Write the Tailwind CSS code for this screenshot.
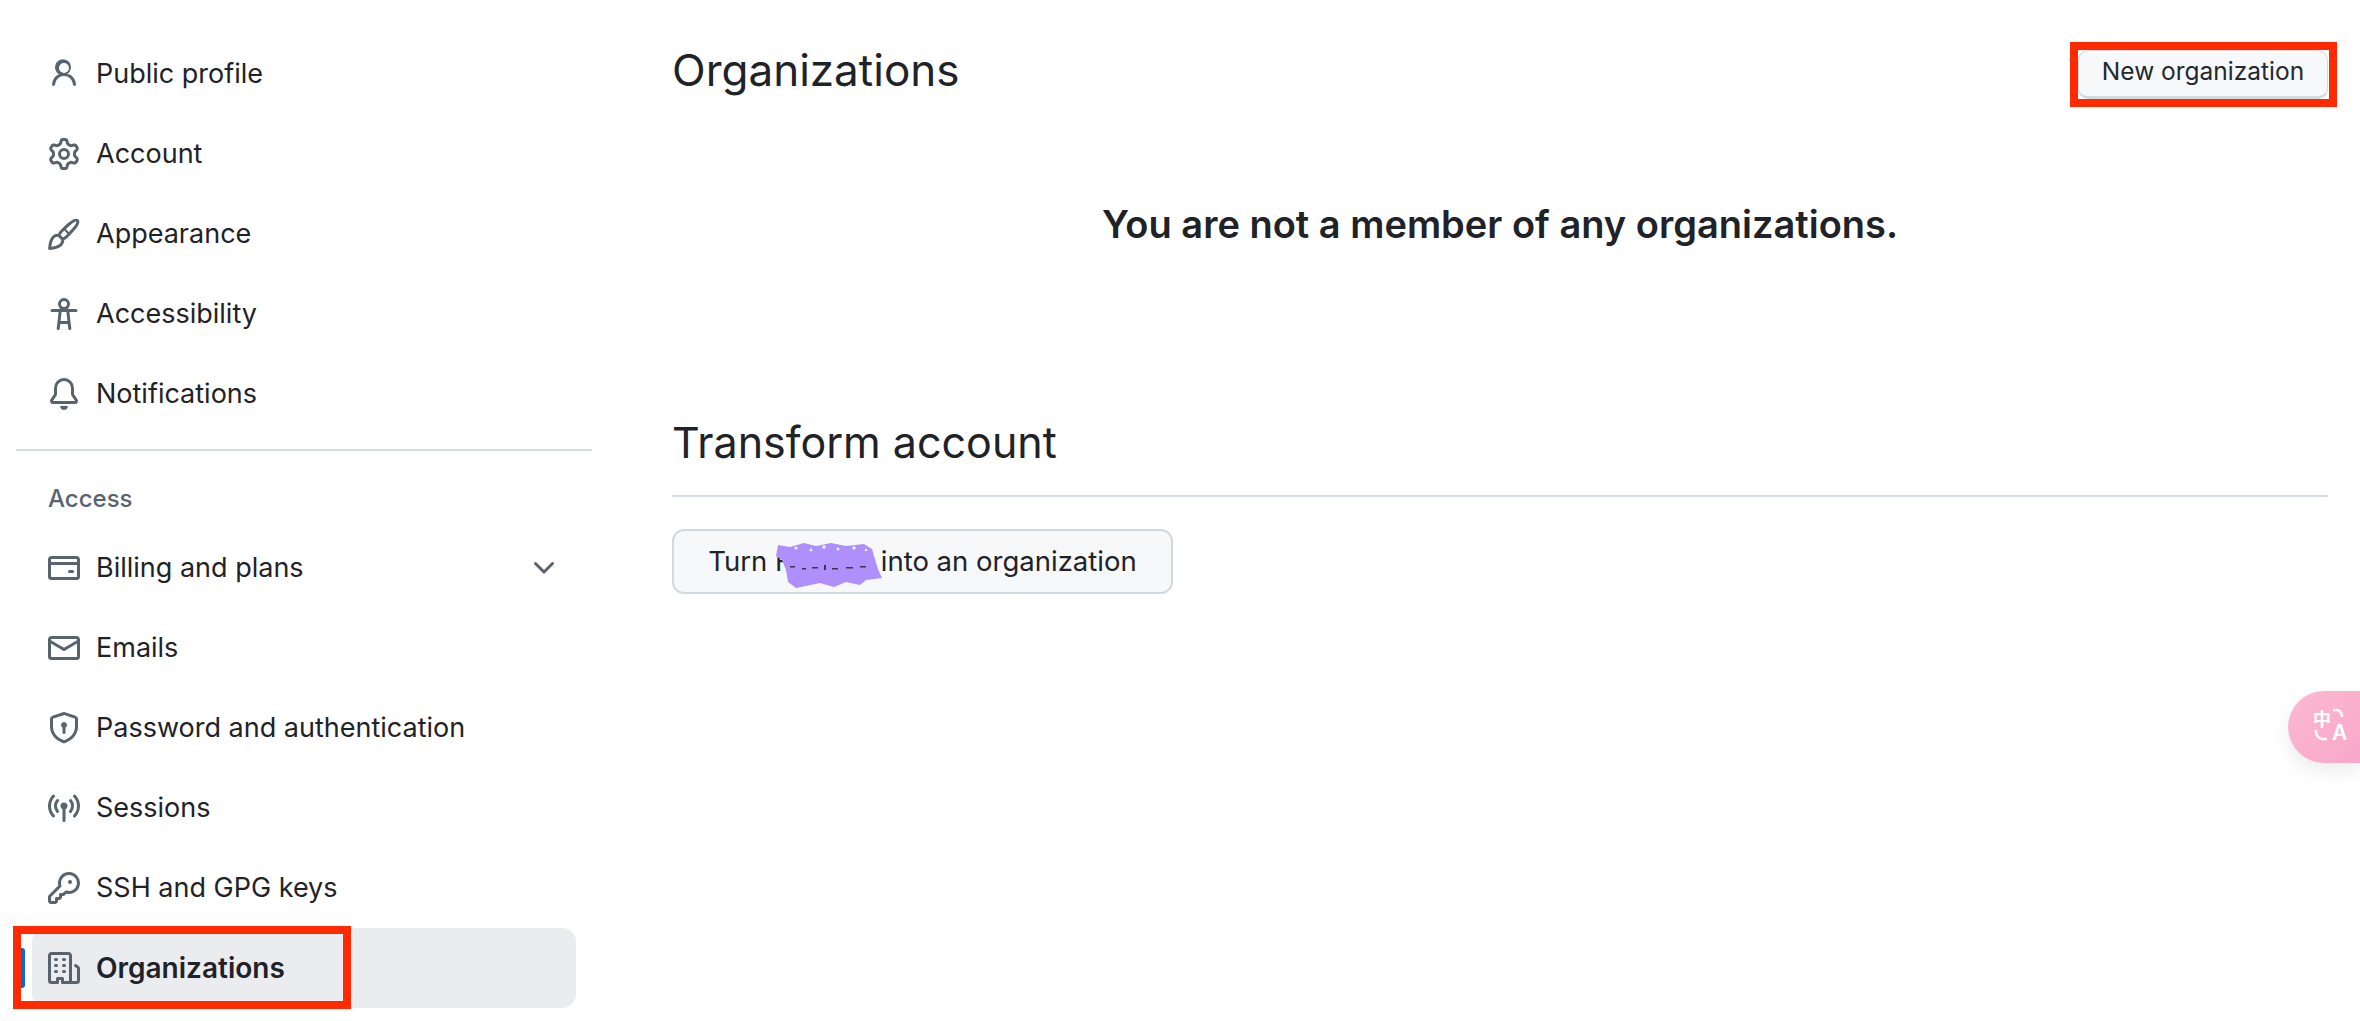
<!DOCTYPE html>
<html lang="en">
<head>
<meta charset="utf-8">
<title>Organizations</title>
<script src="https://cdn.jsdelivr.net/npm/@tailwindcss/browser@4"></script>
</head>
<body class="bg-white overflow-hidden">
<div class="relative w-[2360px] h-[1021px] overflow-hidden flex font-['Inter','Liberation_Sans',sans-serif] text-[#1f2328]">
  <!-- Sidebar -->
  <nav class="w-[576px] ml-[16px] pt-[34px] shrink-0 flex flex-col text-[27px]">
    <a class="h-[80px] flex items-center pl-[32px]"><svg class="w-[32px] h-[32px] mr-[16px] fill-[#59636e]" viewBox="0 0 16 16"><path d="M10.561 8.073a6.005 6.005 0 0 1 3.432 5.142.75.75 0 1 1-1.498.07 4.5 4.5 0 0 0-8.99 0 .75.75 0 1 1-1.498-.07 6.004 6.004 0 0 1 3.431-5.142 3.999 3.999 0 1 1 4.123 0ZM10.5 5a2.5 2.5 0 1 0-5 0 2.5 2.5 0 0 0 5 0Z"/></svg>Public profile</a>
    <a class="h-[80px] flex items-center pl-[32px]"><svg class="w-[32px] h-[32px] mr-[16px] fill-[#59636e]" viewBox="0 0 16 16"><path d="M8 0a8.2 8.2 0 0 1 .701.031C9.444.095 9.99.645 10.16 1.29l.288 1.107c.018.066.079.158.212.224.231.114.454.243.668.386.123.082.233.09.299.071l1.103-.303c.644-.176 1.392.021 1.82.63.27.385.506.792.704 1.218.315.675.111 1.422-.364 1.891l-.814.806c-.049.048-.098.147-.088.294.016.257.016.515 0 .772-.01.147.038.246.088.294l.814.806c.475.469.679 1.216.364 1.891a7.977 7.977 0 0 1-.704 1.217c-.428.61-1.176.807-1.82.63l-1.102-.302c-.067-.019-.177-.011-.3.071a5.909 5.909 0 0 1-.668.386c-.133.066-.194.158-.211.224l-.29 1.106c-.168.646-.715 1.196-1.458 1.26a8.006 8.006 0 0 1-1.402 0c-.743-.064-1.289-.614-1.458-1.26l-.289-1.106c-.018-.066-.079-.158-.212-.224a5.738 5.738 0 0 1-.668-.386c-.123-.082-.233-.09-.299-.071l-1.103.303c-.644.176-1.392-.021-1.82-.63a8.12 8.12 0 0 1-.704-1.218c-.315-.675-.111-1.422.363-1.891l.815-.806c.05-.048.098-.147.088-.294a6.214 6.214 0 0 1 0-.772c.01-.147-.038-.246-.088-.294l-.815-.806C.635 6.045.431 5.298.746 4.623a7.92 7.92 0 0 1 .704-1.217c.428-.61 1.176-.807 1.82-.63l1.102.302c.067.019.177.011.3-.071.214-.143.437-.272.668-.386.133-.066.194-.158.211-.224l.29-1.106C6.009.645 6.556.095 7.299.03 7.53.01 7.764 0 8 0Zm-.571 1.525c-.036.003-.108.036-.137.146l-.289 1.105c-.147.561-.549.967-.998 1.189-.173.086-.34.183-.5.29-.417.278-.97.423-1.529.27l-1.103-.303c-.109-.03-.175.016-.195.045-.22.312-.412.644-.573.99-.014.031-.021.11.059.19l.815.806c.411.406.562.957.53 1.456a4.709 4.709 0 0 0 0 .582c.032.499-.119 1.05-.53 1.456l-.815.806c-.081.08-.073.159-.059.19.162.346.353.677.573.989.02.03.085.076.195.046l1.102-.303c.56-.153 1.113-.008 1.53.27.161.107.328.204.501.29.447.222.85.629.997 1.189l.289 1.105c.029.109.101.143.137.146a6.6 6.6 0 0 0 1.142 0c.036-.003.108-.036.137-.146l.289-1.105c.147-.561.549-.967.998-1.189.173-.086.34-.183.5-.29.417-.278.97-.423 1.529-.27l1.103.303c.109.029.175-.016.195-.045.22-.313.411-.644.573-.99.014-.031.021-.11-.059-.19l-.815-.806c-.411-.406-.562-.957-.53-1.456a4.709 4.709 0 0 0 0-.582c-.032-.499.119-1.05.53-1.456l.815-.806c.081-.08.073-.159.059-.19a6.464 6.464 0 0 0-.573-.989c-.02-.03-.085-.076-.195-.046l-1.102.303c-.56.153-1.113.008-1.53-.27a4.44 4.44 0 0 0-.501-.29c-.447-.222-.85-.629-.997-1.189l-.289-1.105c-.029-.11-.101-.143-.137-.146a6.6 6.6 0 0 0-1.142 0ZM11 8a3 3 0 1 1-6 0 3 3 0 0 1 6 0ZM9.5 8a1.5 1.5 0 1 0-3.001.001A1.5 1.5 0 0 0 9.5 8Z"/></svg>Account</a>
    <a class="h-[80px] flex items-center pl-[32px]"><svg class="w-[32px] h-[32px] mr-[16px]" viewBox="0 0 16 16" fill="none" stroke="#59636e" stroke-width="1.5" stroke-linejoin="round" stroke-linecap="round"><path d="M14.7 1.3c-.7-.7-2.2.2-3.6 1.3-1.4 1.1-3 2.7-4.2 3.9-.7.7-1.2 1.5-1.5 2.2l1.9 1.9c.7-.3 1.5-.8 2.2-1.5 1.2-1.2 2.8-2.8 3.9-4.2 1.1-1.4 2-2.9 1.3-3.6Z"/><path d="M5.4 8.7c-1-.2-2 .1-2.7.8C1.5 10.7 1 13 .8 15.2c2.2-.2 4.5-.7 5.7-1.9.7-.7 1-1.7.8-2.7"/><path d="M8 5.4l2.6 2.6" stroke-width="1"/></svg>Appearance</a>
    <a class="h-[80px] flex items-center pl-[32px]"><svg class="w-[32px] h-[32px] mr-[16px] fill-[#59636e]" viewBox="0 0 16 16"><path d="M9.923 5.302c.063.063.122.129.178.198H14A.75.75 0 0 1 14 7h-3.3l.578 5.163.362 2.997a.75.75 0 0 1-1.49.18L9.868 13H6.132l-.282 2.34a.75.75 0 0 1-1.49-.18l.362-2.997L5.3 7H2a.75.75 0 0 1 0-1.5h3.9a2.54 2.54 0 0 1 .176-.198 3 3 0 1 1 3.847 0ZM9.2 7H6.8l-.51 4.5h3.42ZM9.5 3a1.5 1.5 0 1 0-3.001.001A1.5 1.5 0 0 0 9.5 3Z"/></svg>Accessibility</a>
    <a class="h-[80px] flex items-center pl-[32px]"><svg class="w-[32px] h-[32px] mr-[16px] fill-[#59636e]" viewBox="0 0 16 16"><path d="M8 16c.9 0 1.7-.6 1.9-1.5.1-.3-.1-.5-.4-.5h-3c-.3 0-.5.2-.4.5.2.9 1 1.5 1.9 1.5ZM3 5a5 5 0 0 1 10 0v2.947c0 .05.015.098.042.139l1.703 2.555A1.519 1.519 0 0 1 13.482 13H2.518a1.516 1.516 0 0 1-1.263-2.36l1.703-2.554A.255.255 0 0 0 3 7.947Zm5-3.5A3.5 3.5 0 0 0 4.5 5v2.947c0 .346-.102.683-.294.97l-1.703 2.556a.017.017 0 0 0-.003.01l.001.006c0 .002.002.004.004.006l.006.004.007.001h10.964l.007-.001.006-.004.004-.006.001-.007a.017.017 0 0 0-.003-.01l-1.703-2.554a1.745 1.745 0 0 1-.294-.97V5A3.5 3.5 0 0 0 8 1.5Z"/></svg>Notifications</a>
    <div class="h-[2px] bg-[#d8dee4] mt-[15px] mb-[34px]"></div>
    <div class="h-[28px] pl-[32px] mb-[15px] flex items-center text-[24px] font-medium text-[#59636e]">Access</div>
    <a class="h-[80px] flex items-center pl-[32px] pr-[32px]"><svg class="w-[32px] h-[32px] mr-[16px] fill-[#59636e]" viewBox="0 0 16 16"><path d="M10.75 9a.75.75 0 0 0 0 1.5h1.5a.75.75 0 0 0 0-1.5h-1.5Z"/><path d="M0 3.75C0 2.784.784 2 1.75 2h12.5c.966 0 1.75.784 1.75 1.75v8.5A1.75 1.75 0 0 1 14.25 14H1.75A1.75 1.75 0 0 1 0 12.25ZM14.5 6.5h-13v5.75c0 .138.112.25.25.25h12.5a.25.25 0 0 0 .25-.25Zm0-2.75a.25.25 0 0 0-.25-.25H1.75a.25.25 0 0 0-.25.25V5h13Z"/></svg><span class="flex-1">Billing and plans</span><svg class="w-[32px] h-[32px] fill-[#59636e]" viewBox="0 0 16 16"><path d="M12.78 5.22a.749.749 0 0 1 0 1.06l-4.25 4.25a.749.749 0 0 1-1.06 0L3.22 6.28a.749.749 0 1 1 1.06-1.06L8 8.939l3.72-3.719a.749.749 0 0 1 1.06 0Z"/></svg></a>
    <a class="h-[80px] flex items-center pl-[32px]"><svg class="w-[32px] h-[32px] mr-[16px] fill-[#59636e]" viewBox="0 0 16 16"><path d="M1.75 2h12.5c.966 0 1.75.784 1.75 1.75v8.5A1.75 1.75 0 0 1 14.25 14H1.75A1.75 1.75 0 0 1 0 12.25v-8.5C0 2.784.784 2 1.75 2ZM1.5 12.251c0 .138.112.25.25.25h12.5a.25.25 0 0 0 .25-.25V5.809L8.38 9.397a.75.75 0 0 1-.76 0L1.5 5.809v6.442Zm13-8.181v-.32a.25.25 0 0 0-.25-.25H1.75a.25.25 0 0 0-.25.25v.32L8 7.88Z"/></svg>Emails</a>
    <a class="h-[80px] flex items-center pl-[32px]"><svg class="w-[32px] h-[32px] mr-[16px] fill-[#59636e]" viewBox="0 0 16 16"><path d="m8.533.133 5.25 1.68A1.75 1.75 0 0 1 15 3.48V7c0 1.566-.32 3.182-1.303 4.682-.983 1.498-2.585 2.813-5.032 3.855a1.697 1.697 0 0 1-1.33 0c-2.447-1.042-4.049-2.357-5.032-3.855C1.32 10.182 1 8.566 1 7V3.48a1.75 1.75 0 0 1 1.217-1.667l5.25-1.68a1.748 1.748 0 0 1 1.066 0Zm-.61 1.429.001.001-5.25 1.68a.251.251 0 0 0-.174.237V7c0 1.36.275 2.666 1.057 3.859.784 1.194 2.121 2.342 4.366 3.298a.196.196 0 0 0 .154 0c2.245-.957 3.582-2.103 4.366-3.297C13.225 9.666 13.5 8.358 13.5 7V3.48a.25.25 0 0 0-.174-.238l-5.25-1.68a.25.25 0 0 0-.153 0ZM9.5 6.5c0 .536-.286 1.032-.75 1.3v2.45a.75.75 0 0 1-1.5 0V7.8A1.5 1.5 0 1 1 9.5 6.5Z"/></svg>Password and authentication</a>
    <a class="h-[80px] flex items-center pl-[32px]"><svg class="w-[32px] h-[32px] mr-[16px] fill-[#59636e]" viewBox="0 0 16 16"><path d="M8.75 8.582v5.668a.75.75 0 0 1-1.5 0V8.582a1.75 1.75 0 1 1 1.5 0Zm3.983-7.125a.75.75 0 0 1 1.06.026A7.976 7.976 0 0 1 16 7c0 2.139-.84 4.083-2.207 5.517a.75.75 0 1 1-1.086-1.034A6.474 6.474 0 0 0 14.5 7a6.474 6.474 0 0 0-1.793-4.483.75.75 0 0 1 .026-1.06Zm-9.466 0a.75.75 0 0 1 .026 1.06A6.474 6.474 0 0 0 1.5 7a6.47 6.47 0 0 0 1.793 4.483.75.75 0 0 1-1.086 1.034A7.973 7.973 0 0 1 0 7c0-2.139.84-4.083 2.207-5.517a.75.75 0 0 1 1.06-.026Zm8.556 2.321A4.988 4.988 0 0 1 13 7a4.988 4.988 0 0 1-1.177 3.222.75.75 0 1 1-1.146-.967A3.487 3.487 0 0 0 11.5 7c0-.86-.309-1.645-.823-2.255a.75.75 0 0 1 1.146-.967Zm-6.492.958A3.48 3.48 0 0 0 4.5 7a3.48 3.48 0 0 0 .823 2.255.75.75 0 0 1-1.146.967A4.981 4.981 0 0 1 3 7a4.982 4.982 0 0 1 1.188-3.236.75.75 0 1 1 1.143.972Z"/></svg>Sessions</a>
    <a class="h-[80px] flex items-center pl-[32px]"><svg class="w-[32px] h-[32px] mr-[16px] fill-[#59636e]" viewBox="0 0 16 16"><path d="M10.5 0a5.499 5.499 0 1 1-1.288 10.848l-.932.932a.749.749 0 0 1-.53.22H7v.75a.749.749 0 0 1-.22.53l-.5.5a.749.749 0 0 1-.53.22H5v.75a.749.749 0 0 1-.22.53l-.5.5a.749.749 0 0 1-.53.22h-2A1.75 1.75 0 0 1 0 14.25v-2c0-.199.079-.389.22-.53l4.932-4.932A5.5 5.5 0 0 1 10.5 0Zm-4 5.5c-.001.431.069.86.205 1.269a.75.75 0 0 1-.181.768L1.5 12.56v1.69c0 .138.112.25.25.25h1.69l.06-.06v-1.19a.75.75 0 0 1 .75-.75h1.19l.06-.06v-1.19a.75.75 0 0 1 .75-.75h1.19l1.023-1.025a.75.75 0 0 1 .768-.18A4 4 0 1 0 6.5 5.5ZM11 6a1 1 0 1 1 0-2 1 1 0 0 1 0 2Z"/></svg>SSH and GPG keys</a>
    <a class="relative h-[80px] w-[544px] flex items-center pl-[16px] ml-[16px] rounded-[14px] bg-[#ebecef] text-[28px] font-semibold"><span class="absolute left-[-11px] top-[20px] w-[4px] h-[40px] bg-[#0969da] rounded-r-[3px]"></span><svg class="w-[32px] h-[32px] mr-[16px] fill-[#59636e]" viewBox="0 0 16 16"><path d="M1.75 16A1.75 1.75 0 0 1 0 14.25V1.75C0 .784.784 0 1.75 0h8.5C11.216 0 12 .784 12 1.75v12.5c0 .085-.006.168-.018.25h2.268a.25.25 0 0 0 .25-.25V8.285a.25.25 0 0 0-.111-.208l-1.055-.703a.749.749 0 1 1 .832-1.248l1.055.703c.487.325.779.871.779 1.456v5.965A1.75 1.75 0 0 1 14.25 16h-3.5a.766.766 0 0 1-.197-.026c-.099.017-.2.026-.303.026h-3a.75.75 0 0 1-.75-.75V14h-1v1.25a.75.75 0 0 1-.75.75Zm-.25-1.75c0 .138.112.25.25.25H4v-1.25a.75.75 0 0 1 .75-.75h2.5a.75.75 0 0 1 .75.75v1.25h2.25a.25.25 0 0 0 .25-.25V1.75a.25.25 0 0 0-.25-.25h-8.5a.25.25 0 0 0-.25.25ZM3.75 6h.5a.75.75 0 0 1 0 1.5h-.5a.75.75 0 0 1 0-1.5ZM3 3.75A.75.75 0 0 1 3.75 3h.5a.75.75 0 0 1 0 1.5h-.5A.75.75 0 0 1 3 3.75Zm4 3A.75.75 0 0 1 7.75 6h.5a.75.75 0 0 1 0 1.5h-.5A.75.75 0 0 1 7 6.75ZM7.75 3h.5a.75.75 0 0 1 0 1.5h-.5a.75.75 0 0 1 0-1.5ZM3 9.75A.75.75 0 0 1 3.75 9h.5a.75.75 0 0 1 0 1.5h-.5A.75.75 0 0 1 3 9.75ZM7.75 9h.5a.75.75 0 0 1 0 1.5h-.5a.75.75 0 0 1 0-1.5Z"/></svg>Organizations</a>
  </nav>
  <!-- Main -->
  <main class="ml-[80px] w-[1656px] pt-[50px] flex flex-col">
    <div class="flex items-start justify-between h-[49px]">
      <h1 class="text-[44px] leading-[46px] font-normal -mt-[3px]">Organizations</h1>
      <button class="h-[49px] w-[250px] pb-[4px] bg-[#f6f8fa] rounded-[10px] border border-[#d1d9e0] border-b-[3px] text-[24.5px] text-[#24292f]">New organization</button>
    </div>
    <p class="mt-[101px] text-center text-[38px] leading-[48px] font-semibold">You are not a member of any organizations.</p>
    <h2 class="mt-[168px] pb-[27px] border-b-2 border-[#d8dee4] text-[43px] leading-[52px] font-normal">Transform account</h2>
    <button class="relative mt-[32px] w-[501px] h-[65px] bg-[#f6f8fa] rounded-[12px] border-2 border-[#d1d9e0] text-[27.5px]">Turn Fxxxxxi into an organization
      <svg class="absolute left-[102px] top-[11px] w-[106px] h-[46px]" viewBox="0 0 106 46"><path fill="#ae8ffb" d="M2 3 L14 5 L28 1 L40 4 L55 1 L70 4 L88 2 L96 7 L98 14 L102 27 L106 36 L90 38 L84 43 L70 40 L58 45 L44 41 L30 44 L20 46 L12 40 L10 28 L6 18 L0 14 Z"/><g fill="#f3eefe"><circle cx="20" cy="6" r="1.6"/><circle cx="35" cy="8" r="1.4"/><circle cx="48" cy="5" r="1.8"/><circle cx="62" cy="7" r="1.5"/><circle cx="78" cy="6" r="1.8"/><circle cx="90" cy="8" r="1.3"/></g><g fill="#3a3550"><rect x="14" y="24" width="5" height="1.5"/><rect x="26" y="26" width="4" height="1.5"/><rect x="36" y="25" width="6" height="1.5"/><rect x="48" y="23" width="2" height="5"/><rect x="56" y="26" width="6" height="1.5"/><rect x="70" y="25" width="7" height="1.5"/><rect x="84" y="24" width="6" height="1.5"/></g></svg>
    </button>
  </main>
  <!-- Annotation boxes -->
  <div class="absolute left-[13px] top-[926px] w-[338px] h-[83px] border-[8px] border-[#ff2a00]"></div>
  <div class="absolute left-[2070px] top-[42px] w-[267px] h-[65px] border-[8px] border-[#ff2a00]"></div>
  <!-- Translate widget -->
  <div class="absolute left-[2288px] top-[691px] w-[72px] h-[72px] rounded-l-[36px] bg-linear-to-br from-[#fbb9d2] to-[#f9a8c9] shadow-[0_8px_20px_rgba(0,0,0,0.08)] text-white">
    <span class="absolute left-[25px] top-[18px] text-[18px] leading-[18px] font-bold font-['Noto_Sans_CJK_SC',sans-serif]">中</span>
    <span class="absolute left-[44px] top-[34px] text-[21px] leading-[16px] font-semibold">A</span>
    <svg class="absolute left-[0px] top-[0px] w-[72px] h-[72px]" viewBox="0 0 72 72" fill="none" stroke="#fff" stroke-width="2.5"><path d="M45 19h3a6 6 0 0 1 6 6v1"/><path d="M28 39v2a7 7 0 0 0 7 7h4"/></svg>
  </div>
</div>
</body>
</html>
